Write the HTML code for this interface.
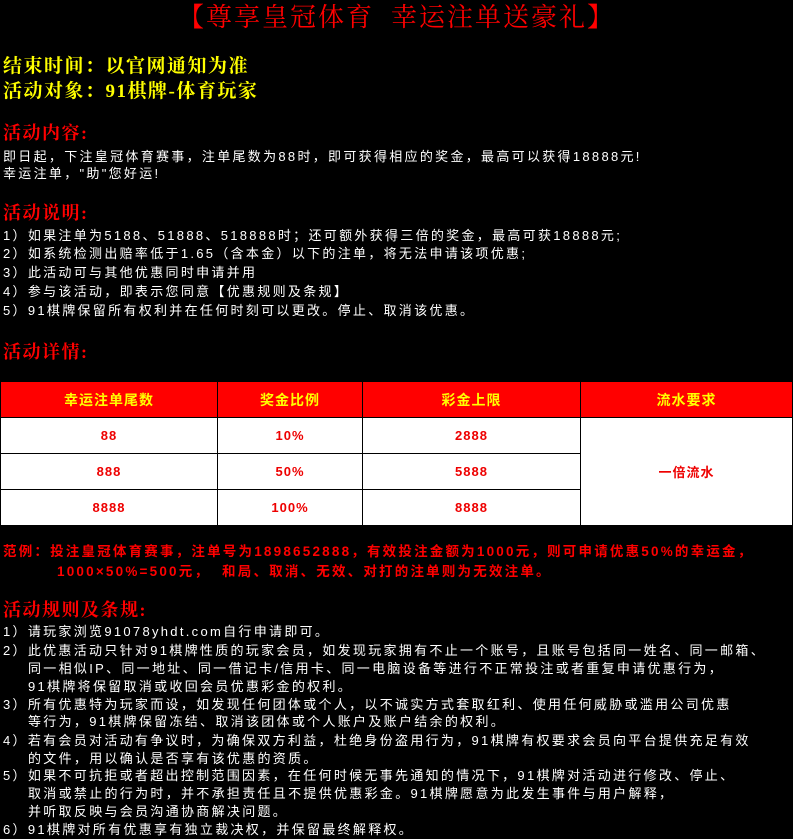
<!DOCTYPE html>
<html><head><meta charset="utf-8"><style>
*{margin:0;padding:0}
body{width:793px;height:839px;background:#000;position:relative;overflow:hidden;font-family:"Liberation Sans","Noto Sans CJK SC","WenQuanYi Zen Hei",sans-serif}
.l{position:absolute;left:3px;white-space:nowrap;color:#fff;font-size:13px;line-height:18px;letter-spacing:2.3px}
.y{color:#ff0;font-size:19px;font-weight:bold;line-height:24px;letter-spacing:1.5px;font-family:"Liberation Serif","Noto Serif CJK SC",serif}
.r{color:#f00;font-size:18px;font-weight:bold;line-height:24px;letter-spacing:1.5px;font-family:"Liberation Serif","Noto Serif CJK SC",serif}
.ex{color:#f00;font-size:13.5px;font-weight:bold;letter-spacing:2.2px}
table{position:absolute;left:0;top:381px;width:793px;border-collapse:collapse;background:#fff;table-layout:fixed}
td{border:1px solid #000;text-align:center;height:35px;color:#e00;font-size:13px;font-weight:bold;letter-spacing:1px}
th{background:#f00;color:#ff0;height:35px;font-size:14px;border:1px solid #000;letter-spacing:1px}
</style></head><body>
<div class="l" style="left:0;width:793px;text-align:center;top:2px;color:#f00;font-size:26px;line-height:32px;letter-spacing:2px;font-family:'Liberation Serif','Noto Serif CJK SC',serif">【尊享皇冠体育&nbsp; 幸运注单送豪礼】</div>
<div class="l y" style="top:55px">结束时间：以官网通知为准</div>
<div class="l y" style="top:80px">活动对象：91棋牌-体育玩家</div>
<div class="l r" style="top:121px">活动内容:</div>
<div class="l" style="top:148px">即日起，下注皇冠体育赛事，注单尾数为88时，即可获得相应的奖金，最高可以获得18888元!</div>
<div class="l" style="top:165px">幸运注单，"助"您好运!</div>
<div class="l r" style="top:201px">活动说明:</div>
<div class="l" style="top:227px">1）如果注单为5188、51888、518888时；还可额外获得三倍的奖金，最高可获18888元;</div>
<div class="l" style="top:245px">2）如系统检测出赔率低于1.65（含本金）以下的注单，将无法申请该项优惠;</div>
<div class="l" style="top:264px">3）此活动可与其他优惠同时申请并用</div>
<div class="l" style="top:283px">4）参与该活动，即表示您同意【优惠规则及条规】</div>
<div class="l" style="top:302px">5）91棋牌保留所有权利并在任何时刻可以更改。停止、取消该优惠。</div>
<div class="l r" style="top:340px">活动详情:</div>
<table>
<tr><th style="width:216px">幸运注单尾数</th><th style="width:144px">奖金比例</th><th style="width:217px">彩金上限</th><th>流水要求</th></tr>
<tr><td>88</td><td>10%</td><td>2888</td><td rowspan="3">一倍流水</td></tr>
<tr><td>888</td><td>50%</td><td>5888</td></tr>
<tr><td>8888</td><td>100%</td><td>8888</td></tr>
</table>
<div class="l ex" style="top:543px">范例：投注皇冠体育赛事，注单号为1898652888，有效投注金额为1000元，则可申请优惠50%的幸运金，</div>
<div class="l ex" style="top:563px;left:57px">1000×50%=500元，&nbsp; 和局、取消、无效、对打的注单则为无效注单。</div>
<div class="l r" style="top:598px">活动规则及条规:</div>
<div class="l" style="top:623px">1）请玩家浏览91078yhdt.com自行申请即可。</div>
<div class="l" style="top:642px">2）此优惠活动只针对91棋牌性质的玩家会员，如发现玩家拥有不止一个账号，且账号包括同一姓名、同一邮箱、</div>
<div class="l" style="top:660px;left:28px">同一相似IP、同一地址、同一借记卡/信用卡、同一电脑设备等进行不正常投注或者重复申请优惠行为，</div>
<div class="l" style="top:678px;left:28px">91棋牌将保留取消或收回会员优惠彩金的权利。</div>
<div class="l" style="top:696px">3）所有优惠特为玩家而设，如发现任何团体或个人，以不诚实方式套取红利、使用任何威胁或滥用公司优惠</div>
<div class="l" style="top:713px;left:28px">等行为，91棋牌保留冻结、取消该团体或个人账户及账户结余的权利。</div>
<div class="l" style="top:732px">4）若有会员对活动有争议时，为确保双方利益，杜绝身份盗用行为，91棋牌有权要求会员向平台提供充足有效</div>
<div class="l" style="top:750px;left:28px">的文件，用以确认是否享有该优惠的资质。</div>
<div class="l" style="top:767px">5）如果不可抗拒或者超出控制范围因素，在任何时候无事先通知的情况下，91棋牌对活动进行修改、停止、</div>
<div class="l" style="top:785px;left:28px">取消或禁止的行为时，并不承担责任且不提供优惠彩金。91棋牌愿意为此发生事件与用户解释，</div>
<div class="l" style="top:803px;left:28px">并听取反映与会员沟通协商解决问题。</div>
<div class="l" style="top:821px">6）91棋牌对所有优惠享有独立裁决权，并保留最终解释权。</div>
</body></html>
